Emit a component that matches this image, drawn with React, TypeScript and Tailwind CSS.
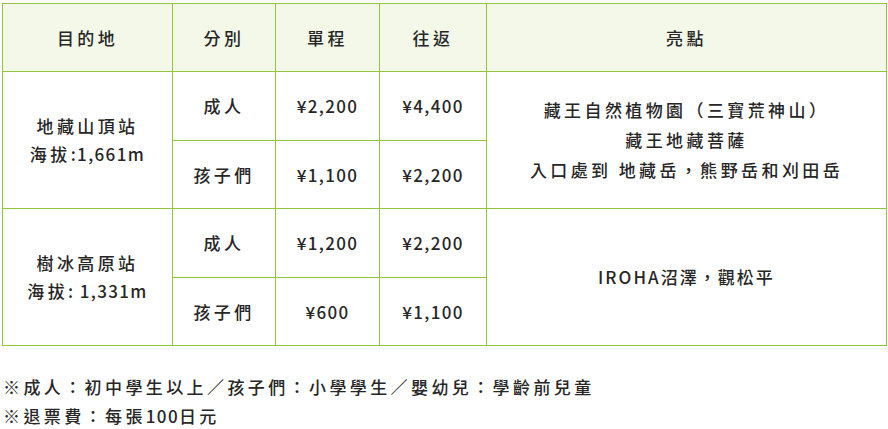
export default function App() {
  const cell = "border border-[#92c43e] text-center align-middle";
  const num = `${cell} tracking-[0.08em]`;
  return (
    <div className="bg-white w-[888px] h-[429px] pt-[3px] px-[2px] text-[#262626] font-medium tracking-[0.2em] font-['Noto_Sans_CJK_TC','Noto_Sans_CJK_JP',sans-serif] text-[17px]">
      <table className="border-collapse w-[885px] table-fixed">
        <colgroup>
          <col className="w-[170px]" />
          <col className="w-[103px]" />
          <col className="w-[104px]" />
          <col className="w-[107px]" />
          <col />
        </colgroup>
        <thead>
          <tr className="h-[68px] bg-[#f3f8e9]">
            <th className={`${cell} font-medium`}>目的地</th>
            <th className={`${cell} font-medium`}>分別</th>
            <th className={`${cell} font-medium`}>單程</th>
            <th className={`${cell} font-medium`}>往返</th>
            <th className={`${cell} font-medium`}>亮點</th>
          </tr>
        </thead>
        <tbody className="leading-[28px]">
          <tr className="h-[69px]">
            <td rowSpan={2} className={cell}>
              地藏山頂站
              <br />
              海拔<span className="tracking-[0.08em]">:1,661m</span>
            </td>
            <td className={cell}>成人</td>
            <td className={num}>¥2,200</td>
            <td className={num}>¥4,400</td>
            <td rowSpan={2} className={`${cell} leading-[30px]`}>
              藏王自然植物園（三寶荒神山）
              <br />
              藏王地藏菩薩
              <br />
              入口處到 地藏岳，熊野岳和刈田岳
            </td>
          </tr>
          <tr className="h-[68px]">
            <td className={cell}>孩子們</td>
            <td className={num}>¥1,100</td>
            <td className={num}>¥2,200</td>
          </tr>
          <tr className="h-[69px]">
            <td rowSpan={2} className={cell}>
              樹冰高原站
              <br />
              海拔<span className="tracking-[0.08em]">: 1,331m</span>
            </td>
            <td className={cell}>成人</td>
            <td className={num}>¥1,200</td>
            <td className={num}>¥2,200</td>
            <td rowSpan={2} className={`${cell} tracking-[0.12em]`}>IROHA沼澤，觀松平</td>
          </tr>
          <tr className="h-[68px]">
            <td className={cell}>孩子們</td>
            <td className={num}>¥600</td>
            <td className={num}>¥1,100</td>
          </tr>
        </tbody>
      </table>
      <div className="mt-[26px] pl-[1px] leading-[29px]">
        <p>※成人：初中學生以上／孩子們：小學學生／嬰幼兒：學齡前兒童</p>
        <p>※退票費：每張<span className="tracking-[0.08em]">100</span>日元</p>
      </div>
    </div>
  );
}
